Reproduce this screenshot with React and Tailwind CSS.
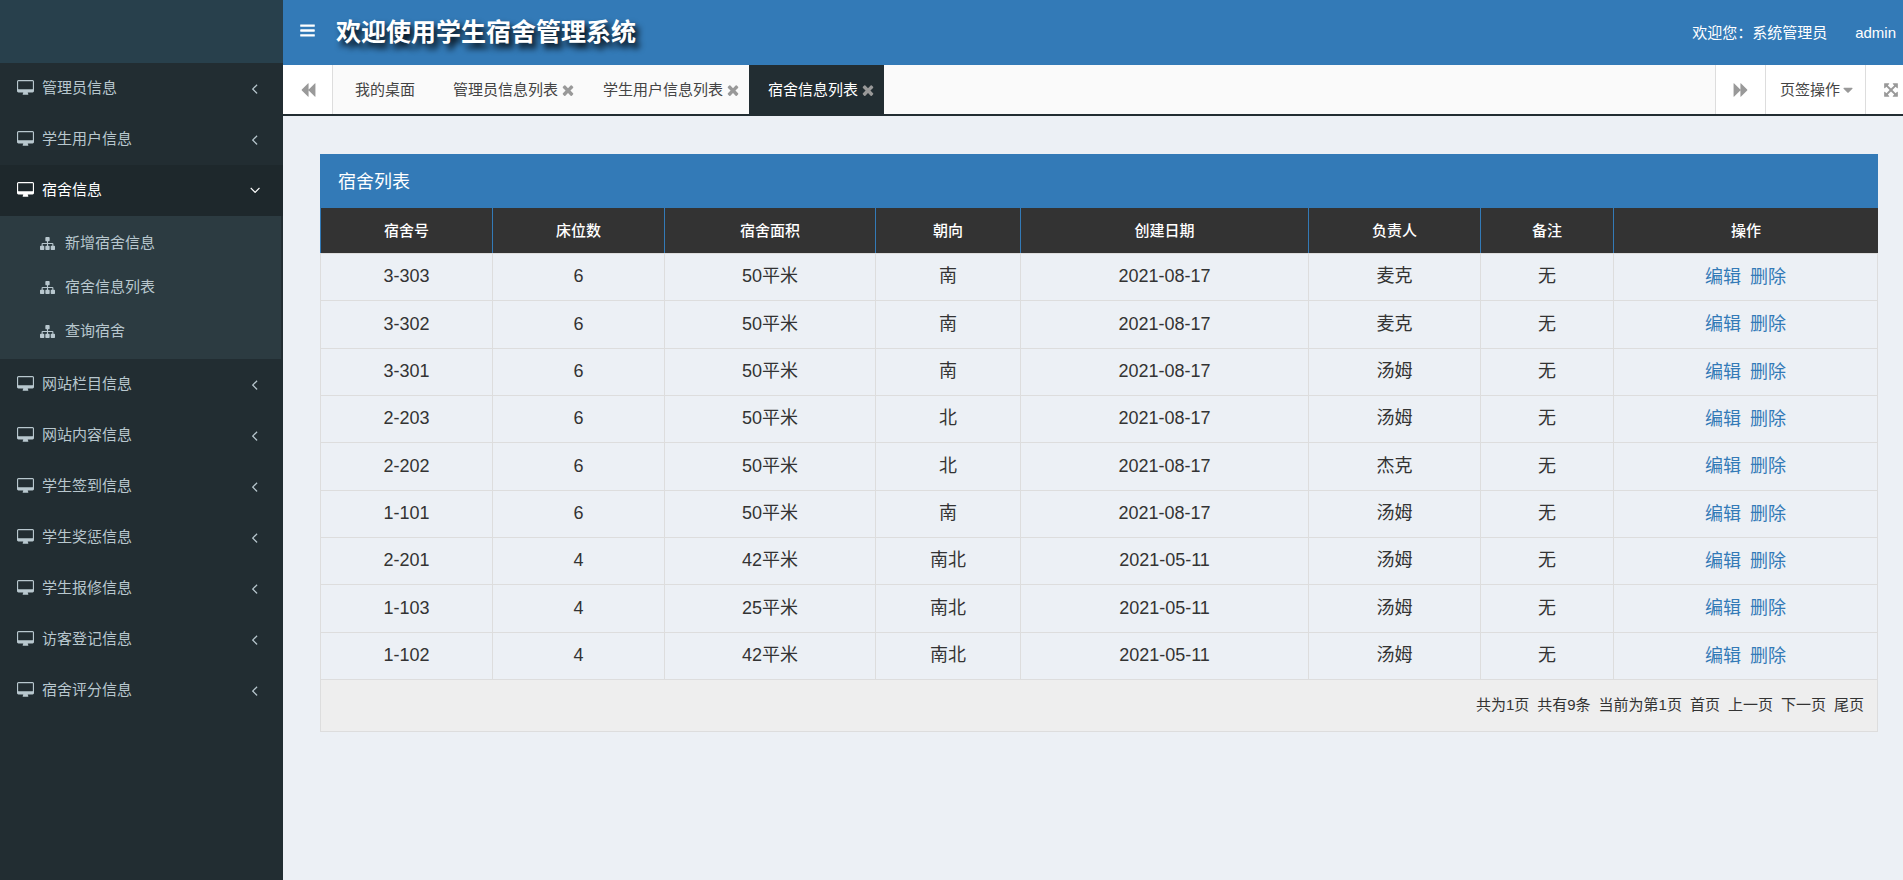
import React, { useState } from 'react';

const ICONS = {
  desktop: 'M1792 992v-832q0-13-9.5-22.5t-22.5-9.5h-1600q-13 0-22.5 9.5t-9.5 22.5v832q0 13 9.5 22.5t22.5 9.5h1600q13 0 22.5-9.5t9.5-22.5zm128-832v1088q0 66-47 113t-113 47h-544q0 37 16 77.5t32 71 16 43.5q0 26-19 45t-45 19h-512q-26 0-45-19t-19-45q0-14 16-44t32-70 16-78h-544q-66 0-113-47t-47-113v-1088q0-66 47-113t113-47h1600q66 0 113 47t47 113z',
  sitemap: 'M1792 1248v320q0 40-28 68t-68 28h-320q-40 0-68-28t-28-68v-320q0-40 28-68t68-28h96v-192h-512v192h96q40 0 68 28t28 68v320q0 40-28 68t-68 28h-320q-40 0-68-28t-28-68v-320q0-40 28-68t68-28h96v-192h-512v192h96q40 0 68 28t28 68v320q0 40-28 68t-68 28h-320q-40 0-68-28t-28-68v-320q0-40 28-68t68-28h96v-192q0-52 38-90t90-38h512v-192h-96q-40 0-68-28t-28-68v-320q0-40 28-68t68-28h320q40 0 68 28t28 68v320q0 40-28 68t-68 28h-96v192h512q52 0 90 38t38 90v192h96q40 0 68 28t28 68z',
  bars: 'M1664 1344v128q0 26-19 45t-45 19h-1408q-26 0-45-19t-19-45v-128q0-26 19-45t45-19h1408q26 0 45 19t19 45zm0-512v128q0 26-19 45t-45 19h-1408q-26 0-45-19t-19-45v-128q0-26 19-45t45-19h1408q26 0 45 19t19 45zm0-512v128q0 26-19 45t-45 19h-1408q-26 0-45-19t-19-45v-128q0-26 19-45t45-19h1408q26 0 45 19t19 45z',
  times: 'M1490 1322q0 40-28 68l-136 136q-28 28-68 28t-68-28l-294-294-294 294q-28 28-68 28t-68-28l-136-136q-28-28-28-68t28-68l294-294-294-294q-28-28-28-68t28-68l136-136q28-28 68-28t68 28l294 294 294-294q28-28 68-28t68 28l136 136q28 28 28 68t-28 68l-294 294 294 294q28 28 28 68z',
  angleLeft: 'M1203 544q0 13-10 23l-393 393 393 393q10 10 10 23t-10 23l-50 50q-10 10-23 10t-23-10l-466-466q-10-10-10-23t10-23l466-466q10-10 23-10t23 10l50 50q10 10 10 23z',
  backward: 'M1683 141q19-19 32-13t13 32v1472q0 26-13 32t-32-13l-710-710q-9-9-13-19v710q0 26-13 32t-32-13l-710-710q-19-19-19-45t19-45l710-710q19-19 32-13t13 32v710q4-10 13-19z',
  caretDown: 'M1408 704q0 26-19 45l-448 448q-19 19-45 19t-45-19l-448-448q-19-19-19-45t19-45 45-19h896q26 0 45 19t19 45z',
  arrows: 'M1411 541l-355 355 355 355 144-144q29-31 70-14 39 17 39 59v448q0 26-19 45t-45 19h-448q-42 0-59-40-17-39 14-69l144-144-355-355-355 355 144 144q31 30 14 69-17 40-59 40h-448q-26 0-45-19t-19-45v-448q0-42 40-59 39-17 69 14l144 144 355-355-355-355-144 144q-19 19-45 19-12 0-24-5-40-17-40-59v-448q0-26 19-45t45-19h448q42 0 59 40 17 39-14 69l-144 144 355 355 355-355-144-144q-31-30-14-69 17-40 59-40h448q26 0 45 19t19 45v448q0 42-39 59-13 5-25 5-26 0-45-19z',
};

function Icon({ name, viewBox = '0 0 1792 1792', className }) {
  return (
    <svg viewBox={viewBox} fill="currentColor" className={className} aria-hidden="true">
      <path d={ICONS[name]} />
    </svg>
  );
}

const menus = [
  { title: '管理员信息' },
  { title: '学生用户信息' },
  { title: '宿舍信息', children: ['新增宿舍信息', '宿舍信息列表', '查询宿舍'] },
  { title: '网站栏目信息' },
  { title: '网站内容信息' },
  { title: '学生签到信息' },
  { title: '学生奖惩信息' },
  { title: '学生报修信息' },
  { title: '访客登记信息' },
  { title: '宿舍评分信息' },
];

const tabs = ['我的桌面', '管理员信息列表', '学生用户信息列表', '宿舍信息列表'];

const columns = [
  { title: '宿舍号', width: 'w-[172px]' },
  { title: '床位数', width: 'w-[172px]' },
  { title: '宿舍面积', width: 'w-[211px]' },
  { title: '朝向', width: 'w-[145px]' },
  { title: '创建日期', width: 'w-[288px]' },
  { title: '负责人', width: 'w-[172px]' },
  { title: '备注', width: 'w-[133px]' },
  { title: '操作', width: 'w-[265px]' },
];

const rows = [
  ['3-303', '6', '50平米', '南', '2021-08-17', '麦克', '无'],
  ['3-302', '6', '50平米', '南', '2021-08-17', '麦克', '无'],
  ['3-301', '6', '50平米', '南', '2021-08-17', '汤姆', '无'],
  ['2-203', '6', '50平米', '北', '2021-08-17', '汤姆', '无'],
  ['2-202', '6', '50平米', '北', '2021-08-17', '杰克', '无'],
  ['1-101', '6', '50平米', '南', '2021-08-17', '汤姆', '无'],
  ['2-201', '4', '42平米', '南北', '2021-05-11', '汤姆', '无'],
  ['1-103', '4', '25平米', '南北', '2021-05-11', '汤姆', '无'],
  ['1-102', '4', '42平米', '南北', '2021-05-11', '汤姆', '无'],
];

function Sidebar() {
  const [open, setOpen] = useState('宿舍信息');

  return (
    <aside className="w-[283px] shrink-0 bg-[#222d32] text-[#b8c7ce]">
      <div className="h-[63px] bg-[#28404c]" />
      <nav>
        {menus.map((menu) => {
          const active = open === menu.title;
          return (
            <div key={menu.title}>
              <button
                type="button"
                onClick={() => setOpen(active ? '' : menu.title)}
                className={`flex h-[51px] w-full items-center pb-px pl-[17px] pr-5 ${active ? 'bg-[#1e282c] text-white' : ''}`}
              >
                <Icon name="desktop" viewBox="0 0 1920 1792" className="h-4 w-[17px]" />
                <span className="ml-2">{menu.title}</span>
                <Icon name="angleLeft" className={`ml-auto h-[17px] w-[17px] ${active ? '-rotate-90' : ''}`} />
              </button>
              {active && menu.children && (
                <div className="mr-0.5 bg-[#2c3b41] pb-1.5 pt-[5px]">
                  {menu.children.map((item) => (
                    <a key={item} href="#" className="flex h-11 items-center pl-10">
                      <Icon name="sitemap" className="h-[15px] w-[15px]" />
                      <span className="ml-[10px]">{item}</span>
                    </a>
                  ))}
                </div>
              )}
            </div>
          );
        })}
      </nav>
    </aside>
  );
}

function TabBar() {
  const [current, setCurrent] = useState('宿舍信息列表');

  return (
    <div className="flex h-[51px] border-b-2 border-[#222d32] bg-[#fafafa] text-[#444]">
      <button type="button" aria-label="向左" className="flex w-[50px] items-center border-r border-[#ddd] bg-white pl-[17px] text-[#999]">
        <Icon name="backward" className="h-4 w-4" />
      </button>
      <div className="flex flex-1 pl-[3px]">
        {tabs.map((tab, i) => {
          const active = tab === current;
          return (
            <div key={tab} className={`flex items-center pl-[19px] ${i ? 'pr-2' : 'pr-[19px]'} ${active ? 'bg-[#222d32] text-white' : ''}`}>
              <button type="button" onClick={() => setCurrent(tab)}>{tab}</button>
              {i > 0 && (
                <button type="button" aria-label="关闭" className="ml-0.5 text-[#999]">
                  <Icon name="times" className="h-4 w-4" />
                </button>
              )}
            </div>
          );
        })}
      </div>
      <button type="button" aria-label="向右" className="flex w-[50px] items-center justify-center border-l border-[#ddd] bg-white text-[#999]">
        <Icon name="backward" className="h-4 w-4 rotate-180" />
      </button>
      <button type="button" className="flex w-[100px] items-center border-l border-[#ddd] bg-white pl-[14px]">
        页签操作
        <Icon name="caretDown" className="h-4 w-4 text-[#999]" />
      </button>
      <button type="button" aria-label="全屏" className="flex w-[38px] items-center border-l border-[#ddd] bg-white pl-[17px] text-[#999]">
        <Icon name="arrows" className="h-4 w-4" />
      </button>
    </div>
  );
}

function DormTable() {
  return (
    <section>
      <h2 className="h-[54px] bg-[#337ab7] pl-[18px] text-lg leading-[56px] text-white">宿舍列表</h2>
      <table className="w-full table-fixed border-separate border-spacing-0 text-center">
        <thead>
          <tr className="h-[45px] bg-[#333] text-white">
            {columns.map((col) => (
              <th key={col.title} className={`${col.width} border-l border-[#337ab7] p-0 font-medium`}>{col.title}</th>
            ))}
          </tr>
        </thead>
        <tbody className="text-lg leading-6 text-[#333]">
          {rows.map((row) => (
            <tr key={row[0]} className="h-[47px] nth-[3n+2]:h-12">
              {row.map((cell, i) => (
                <td key={i} className="border-l border-t border-[#ddd] p-0 pb-0.5">{cell}</td>
              ))}
              <td className="border-x border-t border-[#ddd] p-0 pb-px text-[#337ab7]">
                <a href="#">编辑</a>
                <a href="#" className="ml-[9px]">删除</a>
              </td>
            </tr>
          ))}
        </tbody>
      </table>
      <div className="flex h-[53px] items-center justify-end gap-2 border border-[#ddd] bg-[#eee] pb-0.5 pr-[13px] text-[#333]">
        <span>共为1页</span>
        <span>共有9条</span>
        <span>当前为第1页</span>
        <a href="#">首页</a>
        <a href="#">上一页</a>
        <a href="#">下一页</a>
        <a href="#">尾页</a>
      </div>
    </section>
  );
}

function App() {
  return (
    <div className="flex min-h-screen bg-[#ecf0f5] font-['Liberation_Sans','Noto_Sans_CJK_SC',sans-serif] text-[15px] leading-5">
      <Sidebar />
      <div className="flex min-w-0 flex-1 flex-col">
        <header className="flex h-[65px] items-center bg-[#337ab7] pr-[7px] text-white">
          <button type="button" aria-label="菜单" className="ml-4 pb-1">
            <Icon name="bars" className="h-[17px] w-[17px]" />
          </button>
          <h1 className="ml-5 text-[25px] font-bold leading-[65px] [text-shadow:4px_5px_6px_#000]">欢迎使用学生宿舍管理系统</h1>
          <span className="ml-auto">欢迎您：系统管理员</span>
          <a href="#" className="ml-7">admin</a>
        </header>
        <TabBar />
        <main className="pl-[37px] pr-[25px] pt-[38px]">
          <DormTable />
        </main>
      </div>
    </div>
  );
}

export default App;
